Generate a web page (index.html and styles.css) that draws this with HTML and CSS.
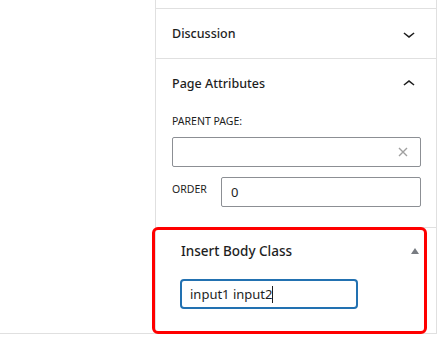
FILE: index.html
```html
<!DOCTYPE html>
<html>
  <head>
    <meta charset="UTF-8" />
    <title>Page settings</title>
    <link rel="stylesheet" href="styles.css">
  </head>
  <body>
    <div class="layout">
      <div class="editor-area"></div>

      <div class="sidebar">
        <div class="panel panel-cut"></div>

        <div class="panel">
          <div class="panel-head">
            <span class="panel-title">Discussion</span>
            <svg class="chevron" width="24" height="24" viewBox="0 0 24 24">
              <path d="M17.5 11.6L12 16l-5.5-4.4.9-1.2L12 14l4.6-3.6 1 1.2z" />
            </svg>
          </div>
        </div>

        <div class="panel">
          <div class="panel-head">
            <span class="panel-title">Page Attributes</span>
            <svg class="chevron" width="24" height="24" viewBox="0 0 24 24">
              <path d="M6.5 12.4L12 8l5.5 4.4-.9 1.2L12 10l-4.6 3.6-1-1.2z" />
            </svg>
          </div>
          <div class="panel-body">
            <label class="field-label">Parent Page:</label>
            <div class="field select-field">
              <svg class="clear-icon" width="10" height="10" viewBox="0 0 10 10">
                <path d="M1 1L9 9M9 1L1 9" />
              </svg>
            </div>
            <div class="order-row">
              <label class="field-label order-label">Order</label>
              <div class="field order-field">0</div>
            </div>
          </div>
        </div>

        <div class="metabox">
          <div class="metabox-head">
            <span class="metabox-title">Insert Body Class</span>
            <svg class="toggle-arrow" width="8" height="6" viewBox="0 0 8 6">
              <polygon points="4,0 8,6 0,6" />
            </svg>
          </div>
          <div class="metabox-body">
            <div class="field class-field">input1 input2<span class="caret"></span></div>
          </div>
        </div>

        <!-- red annotation frame drawn over the screenshot -->
        <div class="highlight"></div>
      </div>
    </div>
  </body>
</html>
```

FILE: styles.css
```css
:root {
  --text: #1e1e1e;
  --line: #e0e0e0;
  --input-border: #8c8f94;
  --focus: #2271b1;
  --icon-gray: #a0a0a0;
  --annotation: #ff0000;
}

body {
  margin: 0;
  padding: 0;
  background: #ffffff;
  font-family: "Noto Sans", "Open Sans", sans-serif;
  color: var(--text);
  overflow: hidden;
}

.layout {
  display: flex;
  height: 333px;
  border-bottom: 1px solid var(--line);
}

.editor-area {
  width: 155px;
  flex: none;
}

.sidebar {
  position: relative;
  width: 280px;
  border-left: 1px solid var(--line);
  border-right: 1px solid var(--line);
}

.panel {
  border-bottom: 1px solid var(--line);
}

.panel-cut {
  height: 8px;
}

.panel-head {
  display: flex;
  align-items: center;
  justify-content: space-between;
  height: 49px;
  padding: 0 15px 0 16px;
}

.panel-title {
  font-size: 12.5px;
  font-weight: 500;
}

.chevron {
  fill: var(--text);
}

.panel-body {
  padding: 5px 15px 20px 16px;
}

.field-label {
  display: block;
  font-size: 10.5px;
  line-height: 16px;
  text-transform: uppercase;
  margin-bottom: 8px;
}

.field {
  box-sizing: border-box;
  height: 30px;
  border: 1px solid var(--input-border);
  border-radius: 2px;
  font-size: 13px;
  display: flex;
  align-items: center;
}

.select-field {
  justify-content: flex-end;
  padding-right: 12px;
}

.clear-icon {
  stroke: var(--icon-gray);
  stroke-width: 1.4;
}

.order-row {
  display: flex;
  align-items: flex-start;
  margin-top: 10px;
}

.order-label {
  width: 49px;
  margin: 4px 0 0;
  flex: none;
}

.order-field {
  flex: 1;
  padding-left: 9px;
}

.metabox-head {
  display: flex;
  align-items: center;
  justify-content: space-between;
  height: 46px;
  padding: 0 17px 0 25px;
}

.metabox-title {
  font-size: 13.5px;
  font-weight: 500;
}

.toggle-arrow {
  fill: #787c82;
}

.metabox-body {
  padding: 5px 24px 24px 24px;
}

.class-field {
  width: 178px;
  border: 2px solid var(--focus);
  border-radius: 4px;
  padding-left: 8px;
}

.caret {
  display: inline-block;
  width: 1px;
  height: 17px;
  background: var(--text);
}

.highlight {
  position: absolute;
  left: -4px;
  top: 227px;
  width: 275px;
  height: 107px;
  box-sizing: border-box;
  border: 3px solid var(--annotation);
  border-radius: 6px;
}
```
